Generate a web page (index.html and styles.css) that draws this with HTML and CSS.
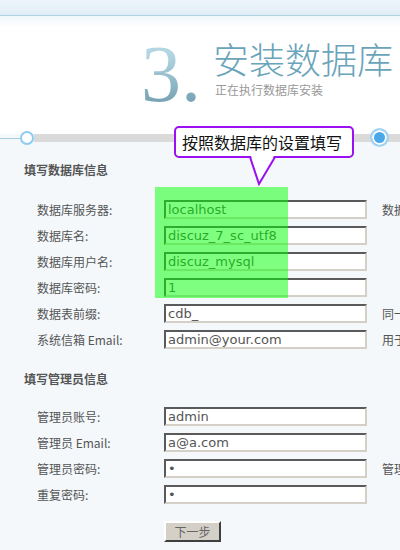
FILE: index.html
```html
<!DOCTYPE html>
<html lang="zh-CN">
<head>
    <meta charset="UTF-8">
    <meta name="viewport" content="width=device-width, initial-scale=1.0">
    <title>Discuz! 安装向导</title>
    <link rel="stylesheet" href="styles.css">
</head>
<body>
    <div class="page">
        <div class="topbar"></div>

        <div class="banner">
            <div class="step-num">3.</div>
            <div class="step-title">
                <h1>安装数据库</h1>
                <p>正在执行数据库安装</p>
            </div>
        </div>

        <div class="steps">
            <span class="steps-line"></span>
            <span class="dot dot-done"></span>
            <span class="dot dot-current"></span>
        </div>

        <div class="main">
            <h2>填写数据库信息</h2>
            <div class="form-list">
                <div class="row">
                    <label>数据库服务器:</label>
                    <input type="text" value="localhost">
                    <span class="hint">数据库服务器地址, 一般为 localhost</span>
                </div>
                <div class="row">
                    <label>数据库名:</label>
                    <input type="text" value="discuz_7_sc_utf8">
                    <span class="hint"></span>
                </div>
                <div class="row">
                    <label>数据库用户名:</label>
                    <input type="text" value="discuz_mysql">
                    <span class="hint"></span>
                </div>
                <div class="row">
                    <label>数据库密码:</label>
                    <input type="text" value="1">
                    <span class="hint"></span>
                </div>
                <div class="row">
                    <label>数据表前缀:</label>
                    <input type="text" value="cdb_">
                    <span class="hint">同一数据库运行多个论坛时，请修改前缀</span>
                </div>
                <div class="row">
                    <label>系统信箱 Email:</label>
                    <input type="text" value="admin@your.com">
                    <span class="hint">用于发送程序错误报告</span>
                </div>
            </div>

            <h2 class="second">填写管理员信息</h2>
            <div class="form-list admin">
                <div class="row">
                    <label>管理员账号:</label>
                    <input type="text" value="admin">
                    <span class="hint"></span>
                </div>
                <div class="row">
                    <label>管理员 Email:</label>
                    <input type="text" value="a@a.com">
                    <span class="hint"></span>
                </div>
                <div class="row">
                    <label>管理员密码:</label>
                    <input type="password" value="a">
                    <span class="hint">管理员密码不能为空</span>
                </div>
                <div class="row">
                    <label>重复密码:</label>
                    <input type="password" value="a">
                    <span class="hint"></span>
                </div>
            </div>

            <button class="next-btn">下一步</button>
        </div>

        <!-- 标注 -->
        <div class="mark-green"></div>
        <div class="tip">按照数据库的设置填写</div>
        <svg class="tip-tail" width="28" height="30" viewBox="0 0 28 30">
            <polygon points="2,0 25,0 10,27" fill="#fff"/>
            <polyline points="1,1 10,28 26,1" fill="none" stroke="#9b10f2" stroke-width="2"/>
        </svg>
    </div>
</body>
</html>
```

FILE: styles.css
```css
html, body {
    margin: 0;
    padding: 0;
    overflow: hidden;
}
body {
    width: 400px;
    height: 550px;
    font-family: "Noto Sans CJK SC", sans-serif;
    font-size: 12px;
    color: #555;
    background: #f4f8fb;
}
.page {
    position: relative;
    width: 640px;
}
.topbar {
    height: 15px;
    background: linear-gradient(#edf5fb, #e1edf6);
    border-bottom: 1px solid #aed2df;
}
.banner {
    display: flex;
    height: 118px;
    box-sizing: border-box;
    padding-left: 141px;
    background: linear-gradient(#f1f7fb, #fff 12px);
}
.step-num {
    font-family: "Liberation Serif", serif;
    font-size: 80px;
    line-height: 80px;
    margin-top: 18px;
    background: linear-gradient(#b4d6e2 20%, #5b8ca0 90%);
    -webkit-background-clip: text;
    background-clip: text;
    color: transparent;
}
.step-title {
    margin-left: 12px;
    padding-top: 22px;
}
.step-title h1 {
    margin: 0;
    font-size: 36px;
    font-weight: 300;
    line-height: 40px;
    color: #6aa4ba;
}
.step-title p {
    margin: 5px 0 0 2px;
    font-size: 12px;
    line-height: 14px;
    color: #999;
}
.steps {
    position: relative;
    height: 8px;
}
.steps::before {
    content: "";
    display: block;
    margin-left: 34px;
    height: 8px;
    background: #dadada;
}
.steps-line {
    position: absolute;
    left: 0;
    top: 4px;
    width: 22px;
    height: 1px;
    background: #a8cde0;
}
.dot {
    position: absolute;
    border-radius: 50%;
}
.dot-done {
    left: 20px;
    top: -3px;
    width: 10px;
    height: 10px;
    border: 2px solid #8ecbf2;
    background: #fff;
}
.dot-current {
    left: 370px;
    top: -6px;
    width: 15px;
    height: 15px;
    border: 2px solid #a3d4f4;
    background: #4ba8e8;
    box-shadow: inset 0 0 0 2px #fff;
}
.main {
    padding-top: 20px;
    padding-bottom: 20px;
}
.main h2 {
    margin: 0;
    padding-left: 24px;
    font-size: 12px;
    font-weight: bold;
    line-height: 16px;
    color: #555;
}
.main h2.second {
    margin-top: 22px;
}
.form-list {
    margin-top: 22px;
}
.form-list.admin {
    margin-top: 20px;
}
.row {
    display: grid;
    grid-template-columns: 164px 203px 1fr;
    align-items: center;
    height: 19px;
    margin-bottom: 7px;
}
.row label {
    padding-left: 37px;
    line-height: 19px;
    white-space: nowrap;
}
.row input {
    box-sizing: border-box;
    width: 203px;
    height: 19px;
    margin: 0;
    padding: 0 2px;
    border: 2px solid;
    border-color: #5a5a5a #d4d0c8 #d4d0c8 #5a5a5a;
    background: #fff;
    font-family: "DejaVu Sans", sans-serif;
    font-size: 13px;
    color: #555;
    outline: none;
}
.hint {
    padding-left: 15px;
    white-space: nowrap;
}
.next-btn {
    display: block;
    margin: 17px 0 0 164px;
    width: 57px;
    height: 21px;
    padding: 0;
    border: 2px solid;
    border-color: #fff #404040 #404040 #fff;
    background: #d4d0c8;
    font-family: "Noto Sans CJK SC", sans-serif;
    font-size: 12px;
    color: #666;
}
.mark-green {
    position: absolute;
    left: 155px;
    top: 187px;
    width: 133px;
    height: 111px;
    background: rgba(0, 255, 0, 0.5);
}
.tip {
    position: absolute;
    left: 174px;
    top: 126px;
    width: 180px;
    height: 32px;
    box-sizing: border-box;
    padding-left: 6px;
    border: 2px solid #9b10f2;
    border-radius: 5px;
    background: #fff;
    font-size: 16px;
    line-height: 28px;
    color: #111;
}
.tip-tail {
    position: absolute;
    left: 249px;
    top: 156px;
}
```
